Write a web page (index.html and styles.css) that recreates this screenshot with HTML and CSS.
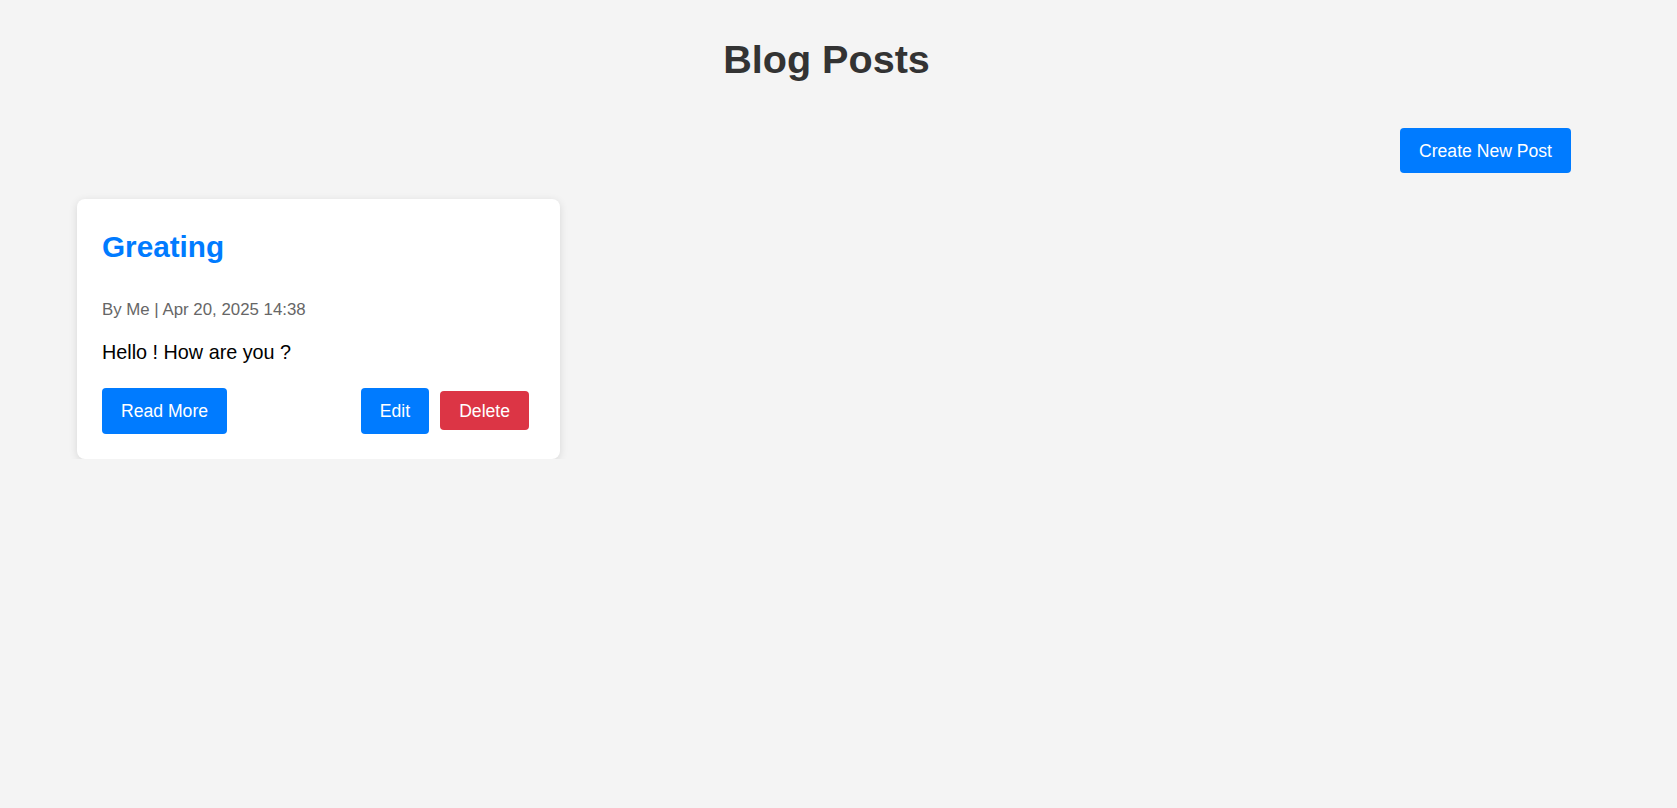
FILE: index.html
```html
<!DOCTYPE html>
<html lang="en">
<head>
<meta charset="utf-8">
<title>Blog Posts</title>
<link rel="stylesheet" href="styles.css">
</head>
<body>
  <h1 class="page-title">Blog Posts</h1>
  <div class="toolbar">
    <a class="btn btn-primary btn-create" href="#">Create New Post</a>
  </div>
  <div class="posts">
    <article class="card">
      <h2 class="card-title">Greating</h2>
      <p class="card-meta">By Me | Apr 20, 2025 14:38</p>
      <p class="card-body">Hello ! How are you ?</p>
      <div class="card-actions">
        <a class="btn btn-primary" href="#">Read More</a>
        <div class="card-actions-right">
          <a class="btn btn-primary" href="#">Edit</a>
          <button class="btn btn-danger" type="button">Delete</button>
        </div>
      </div>
    </article>
  </div>
</body>
</html>
```
FILE: styles.css
```css
html, body {
  margin: 0;
  padding: 0;
}
body {
  background: #f4f4f4;
  font-family: "Liberation Sans", Arial, sans-serif;
  font-size: 19.8px;
  color: #000;
}
.page-title {
  margin: 37px 0 0;
  padding-right: 24px;
  text-align: center;
  font-size: 39.6px;
  font-weight: bold;
  color: #333;
  line-height: normal;
}
.toolbar {
  display: flex;
  justify-content: flex-end;
  padding-right: 106px;
  margin-top: 46px;
}
.btn {
  display: inline-block;
  font-family: "Liberation Sans", Arial, sans-serif;
  font-size: 17.6px;
  line-height: 20px;
  padding: 13px 19px;
  border: none;
  border-radius: 4px;
  color: #fff;
  text-decoration: none;
  cursor: pointer;
}
.btn-create {
  padding: 12.5px 19px;
}
.btn-primary {
  background: #007bff;
}
.btn-danger {
  background: #dc3545;
  padding: 9.5px 19px;
}
.posts {
  display: flex;
  padding-left: 77px;
  margin-top: 26px;
}
.card {
  width: 483px;
  box-sizing: border-box;
  padding: 25px;
  background: #fff;
  border-radius: 8px;
  box-shadow: 0 2px 8px rgba(0, 0, 0, 0.12);
}
.card-title {
  margin: 6px 0 0;
  font-size: 29.7px;
  font-weight: bold;
  color: #007bff;
  line-height: normal;
}
.card-meta {
  margin: 36px 0 0;
  font-size: 16.83px;
  color: #666;
  line-height: normal;
}
.card-body {
  margin: 21px 0 0;
  line-height: normal;
}
.card-actions {
  margin-top: 23.5px;
  display: flex;
  justify-content: space-between;
  align-items: center;
}
.card-actions-right {
  display: flex;
  align-items: center;
  gap: 11px;
  padding-right: 6px;
}
```
